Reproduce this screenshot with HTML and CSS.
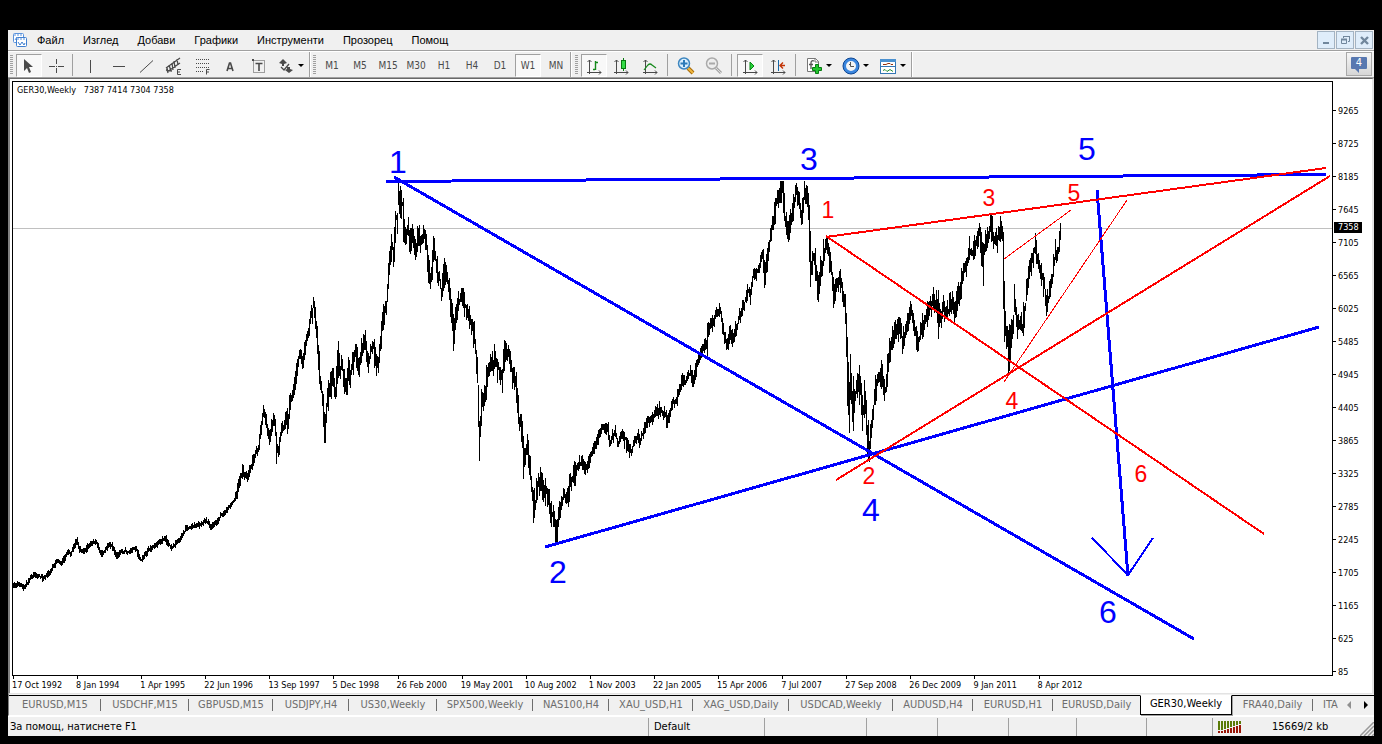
FILE: index.html
```html
<!DOCTYPE html>
<html lang="bg">
<head>
<meta charset="utf-8">
<title>GER30,Weekly</title>
<link rel="stylesheet" href="styles.css">
</head>
<body>
<div class="app">
  <header class="menubar">
    <svg class="app-icon" width="16" height="16" viewBox="0 0 16 16"><rect x="1.5" y="1.500" width="10" height="9" rx="1" fill="#fff" stroke="#5b93dc"/><path d="M2 3h9" stroke="#5b93dc" stroke-dasharray="2 1"/><path d="M3 8l2-3v3" fill="none" stroke="#5b93dc"/><rect x="4.500" y="5.500" width="10" height="9" rx="1" fill="#fff" stroke="#3f7fd0"/><path d="M5 7h9" stroke="#5b93dc" stroke-dasharray="2 1"/><path d="M6 10l2 3 2-3 2 3 1-2" fill="none" stroke="#3f7fd0"/></svg>
    <nav class="menu">
      <button>Файл</button><button>Изглед</button><button>Добави</button><button>Графики</button><button>Инструменти</button><button>Прозорец</button><button>Помощ</button>
    </nav>
    <div class="window-buttons">
      <button aria-label="Minimize"><svg width="14" height="14" viewBox="0 0 14 14"><path d="M4 10h6" stroke="#71879c" stroke-width="2"/></svg></button>
      <button aria-label="Restore"><svg width="14" height="14" viewBox="0 0 14 14" fill="none" stroke="#71879c"><path d="M5.500 5V3.500h6v5H10M5 3.500h7"/><path d="M3 6.500h6" stroke-width="2"/><path d="M3.500 6v4.500h5V6"/></svg></button>
      <button aria-label="Close"><svg width="14" height="14" viewBox="0 0 14 14"><path d="M4 4l7 7M11 4l-7 7" stroke="#71879c" stroke-width="2.400"/></svg></button>
    </div>
  </header>

  <div class="toolbar">
    <div class="group">
      <span class="grip"></span>
      <button class="tool pressed" aria-label="Cursor"><svg width="20" height="20" viewBox="0 0 20 20"><path d="M5 3v12l3-3 2 5 2-1-2-5h4z" fill="#4a4a4a"/></svg></button>
      <button class="tool" aria-label="Crosshair"><svg width="20" height="20" viewBox="0 0 20 20"><path d="M9.500 3v5M9.500 12v5M2 10.500h6M11 10.500h6M9 10.500h1" stroke="#4a4a4a"/></svg></button>
      <span class="sep"></span>
      <button class="tool" aria-label="Vertical line"><svg width="20" height="20" viewBox="0 0 20 20"><path d="M10.500 4v13" stroke="#4a4a4a"/></svg></button>
      <button class="tool" aria-label="Horizontal line"><svg width="20" height="20" viewBox="0 0 20 20"><path d="M5 10.500h12" stroke="#4a4a4a"/></svg></button>
      <button class="tool" aria-label="Trend line"><svg width="20" height="20" viewBox="0 0 20 20"><path d="M4 16.500L17 4.500" stroke="#4a4a4a"/></svg></button>
      <button class="tool" aria-label="Channel"><svg width="20" height="20" viewBox="0 0 20 20"><path d="M2 12L16 2M3 16L16 7M3 12l1 5M5 9l2 6M8 7l1 7M10 5l1 7M13 3l1 6M2 14l6 1" fill="none" stroke="#4a4a4a" stroke-width="1.300"/><path d="M17 13.500h-3.500v5H17M13.500 16H16" fill="none" stroke="#4a4a4a"/></svg></button>
      <button class="tool" aria-label="Fibonacci"><svg width="20" height="20" viewBox="0 0 20 20" stroke="#4a4a4a" fill="none"><path d="M4 3.500h13M4 7.500h13M4 11.500h13M4 15.500h8" stroke-dasharray="1 1"/><path d="M17.500 13.500h-3v5M14.500 16H17"/></svg></button>
      <button class="tool" aria-label="Text"><svg width="20" height="20" viewBox="0 0 20 20"><path d="M7 15L9.500 7h1L13 15M8 12.500h4" fill="none" stroke="#4a4a4a" stroke-width="1.600"/></svg></button>
      <button class="tool" aria-label="Text label"><svg width="20" height="20" viewBox="0 0 20 20"><rect x="5.500" y="4.500" width="11" height="12" fill="none" stroke="#4a4a4a" stroke-dasharray="1 1"/><path d="M4 3h2v2H4z" fill="#4a4a4a"/><path d="M7.500 7.500h7M11 7v8" stroke="#4a4a4a" stroke-width="1.600"/></svg></button>
      <button class="tool drop" aria-label="Arrows"><svg width="20" height="20" viewBox="0 0 20 20"><path d="M3 7l4-4 4 4-3 1v2H6V8zM9 14l2-1v-2h3v2l3 1-4 3z" fill="#4a4a4a"/><path d="M5 11l3 3 5-6" fill="none" stroke="#4a4a4a" stroke-width="1.300"/></svg><span class="caret"></span></button>
    </div>
    <div class="group">
      <span class="grip"></span>
      <button class="tool">M1</button><button class="tool">M5</button><button class="tool">M15</button><button class="tool">M30</button><button class="tool">H1</button><button class="tool">H4</button><button class="tool">D1</button><button class="tool pressed">W1</button><button class="tool">MN</button>
    </div>
    <div class="group wide">
      <span class="grip"></span>
      <button class="tool pressed" aria-label="Bar chart"><svg width="20" height="20" viewBox="0 0 20 20" fill="none" stroke="#4a4a4a"><path d="M5.500 18V4M3.500 6l2-2 2 2M3 16.500h14M15 14.500l2 2-2 2"/><path d="M11.500 5v9M12 6.500h2M9 13.500h2" stroke="#168a1c" stroke-width="1.400"/></svg></button>
      <button class="tool" aria-label="Candlesticks"><svg width="20" height="20" viewBox="0 0 20 20" fill="none" stroke="#4a4a4a"><path d="M4.500 18V4M2.500 6l2-2 2 2M2 16.500h14M14 14.500l2 2-2 2"/><path d="M11.500 2v13" stroke="#087a10"/><rect x="9.500" y="4.500" width="4" height="8" fill="#35dc48" stroke="#087a10"/></svg></button>
      <button class="tool" aria-label="Line chart"><svg width="20" height="20" viewBox="0 0 20 20" fill="none" stroke="#4a4a4a"><path d="M5.500 18V4M3.500 6l2-2 2 2M3 16.500h14M15 14.500l2 2-2 2"/><path d="M4 14l4-5q2-2 4 0l4 3" stroke="#168a1c" stroke-width="1.200"/></svg></button>
      <span class="sep"></span>
      <button class="tool" aria-label="Zoom in"><svg width="20" height="20" viewBox="0 0 20 20"><path d="M12 12l5 5" stroke="#a96c08" stroke-width="4"/><path d="M12 12l5 5" stroke="#f0b840" stroke-width="2"/><circle cx="8" cy="7.500" r="5.500" fill="#d9efff" stroke="#3d86bf" stroke-width="1.500"/><path d="M4.500 7.500h7M8 4v7" stroke="#2b7bb9" stroke-width="2"/></svg></button>
      <button class="tool" aria-label="Zoom out"><svg width="20" height="20" viewBox="0 0 20 20"><path d="M12 12l5 5" stroke="#a5a5a5" stroke-width="3"/><path d="M12 12l5 5" stroke="#ddd"/><circle cx="8" cy="7.500" r="5.500" fill="#eee" stroke="#aaa" stroke-width="1.500"/><path d="M5 7.500h6" stroke="#aaa" stroke-width="2"/></svg></button>
      <span class="sep"></span>
      <button class="tool pressed" aria-label="Auto scroll"><svg width="20" height="20" viewBox="0 0 20 20" fill="none" stroke="#4a4a4a"><path d="M5.500 18V4M3.500 6l2-2 2 2M3 16.500h14M15 14.500l2 2-2 2"/><path d="M10 6l4 4-4 4z" fill="#28d33c" stroke="#078512"/></svg></button>
      <button class="tool" aria-label="Chart shift"><svg width="20" height="20" viewBox="0 0 20 20" fill="none" stroke="#4a4a4a"><path d="M5.500 18V4M3.500 6l2-2 2 2M3 16.500h14M15 14.500l2 2-2 2"/><path d="M10.500 4v11" stroke="#1769a8"/><path d="M12 9.500h5M15 6.500l-3 3 3 3" stroke="#c33406" stroke-width="1.400"/></svg></button>
      <span class="sep"></span>
      <button class="tool drop" aria-label="Indicators"><svg width="20" height="20" viewBox="0 0 20 20"><path d="M3.500 2.500h8l3 3v10h-11z" fill="#fff" stroke="#777"/><path d="M11 2v4h4" fill="none" stroke="#777"/><path d="M10 5q-3-1-3 2v6M5 8.500h4" fill="none" stroke="#555" stroke-width="1.300"/><path d="M11.500 8.500h3v3h3v3h-3v3h-3v-3h-3v-3h3z" fill="#22c52e" stroke="#087c12"/></svg><span class="caret"></span></button>
      <button class="tool drop" aria-label="Periods"><svg width="20" height="20" viewBox="0 0 20 20"><circle cx="10" cy="10" r="6.500" fill="#f4f4f4" stroke="#3b86de" stroke-width="3"/><circle cx="10" cy="10" r="8" fill="none" stroke="#0d4692"/><path d="M9.500 6v4.500H13M8 8l2 2" fill="none" stroke="#555"/></svg><span class="caret"></span></button>
      <button class="tool drop" aria-label="Templates"><svg width="20" height="20" viewBox="0 0 20 20"><rect x="2.500" y="3.500" width="15" height="14" fill="#fff" stroke="#3476b5"/><path d="M2 4.500h16" stroke="#4b91d0" stroke-width="3"/><path d="M3 10.500h14" stroke="#3476b5"/><path d="M5 8.500h3l2-1h2l1 1h2" fill="none" stroke="#96330f"/><path d="M5 14.500l2-1 2 2 3-2 3 2" fill="none" stroke="#238c30"/></svg><span class="caret"></span></button>
    </div>
    <button class="messages" aria-label="Messages"><span>4</span></button>
  </div>

  <main class="chart">
    <div class="plot">
      <svg class="plot-lines" viewBox="13 82 1319 593" preserveAspectRatio="none">
        <path class="bid" d="M13 228.500H1332"/>
        <path class="bars" id="bars"/>
        <path class="wave blue" d="M386 181.500L1326 174.500M394 177L1194 639M545 547L1319 327M1097 190L1128 576"/>
        <path class="wave tip" d="M1092 538L1128 575L1153 538"/>
        <path class="wave red" d="M826 237L1326 168M826 236L1264 534M836 480L1330 176"/>
        <path class="wave thin" d="M1004 259L1071 210M1004 382L1127 200"/>
      </svg>
      <div id="marks"></div>
      <div class="quote">GER30,Weekly&nbsp;&nbsp; 7387 7414 7304 7358</div>
    </div>
    <ol class="prices">
      <li>9265</li><li>8725</li><li>8185</li><li>7645</li><li>7105</li><li>6565</li><li>6025</li><li>5485</li><li>4945</li><li>4405</li><li>3865</li><li>3325</li><li>2785</li><li>2245</li><li>1705</li><li>1165</li><li>625</li><li>85</li>
      <li class="current">7358</li>
    </ol>
    <ol class="dates">
      <li>17 Oct 1992</li><li>8 Jan 1994</li><li>1 Apr 1995</li><li>22 Jun 1996</li><li>13 Sep 1997</li><li>5 Dec 1998</li><li>26 Feb 2000</li><li>19 May 2001</li><li>10 Aug 2002</li><li>1 Nov 2003</li><li>22 Jan 2005</li><li>15 Apr 2006</li><li>7 Jul 2007</li><li>27 Sep 2008</li><li>26 Dec 2009</li><li>9 Jan 2011</li><li>8 Apr 2012</li>
    </ol>
  </main>

  <div class="tabbar">
    <nav class="tabs">
      <button>EURUSD,M15</button><button>USDCHF,M15</button><button>GBPUSD,M15</button><button>USDJPY,H4</button><button>US30,Weekly</button><button>SPX500,Weekly</button><button>NAS100,H4</button><button>XAU_USD,H1</button><button>XAG_USD,Daily</button><button>USDCAD,Weekly</button><button>AUDUSD,H4</button><button>EURUSD,H1</button><button class="before">EURUSD,Daily</button><button class="active">GER30,Weekly</button><button>FRA40,Daily</button><button class="last">ITA</button>
    </nav>
    <button class="scroll off" aria-label="Scroll left"></button>
    <button class="scroll" aria-label="Scroll right"></button>
  </div>

  <footer class="status">
    <span>За помощ, натиснете F1</span><span>Default</span><span></span><span></span><span></span><span></span><span></span><span></span>
    <span class="traffic"><svg width="24" height="13" viewBox="0 0 24 13"><path d="M1 0v9M4 0v9M7 0v8M10 0v7M13 0v6M16 0v5M19 0v4M22 0v3" stroke="#5a7a08" stroke-width="2"/><path d="M1 10v2M4 10v2M7 9v3M10 8v4M13 7v5M16 6v6M19 5v7M22 4v8" stroke="#9b1708" stroke-width="2"/></svg>15669/2 kb</span>
    <svg class="resize" width="14" height="14" viewBox="0 0 14 14"><path d="M0 14L14 0M4 14L14 4M8 14l6-6M12 14l2-2" stroke="#999" stroke-width="1.500"/></svg>
  </footer>
</div>
<script src="chart.js"></script>
</body>
</html>
```

FILE: styles.css
```css
* { box-sizing: border-box; }
body {
  margin: 0;
  background: #000;
  color: #000;
  font: 11px/14px "DejaVu Sans Condensed", "DejaVu Sans", sans-serif;
}
button { font: inherit; color: inherit; border: 0; padding: 0; background: none; }
ol { list-style: none; margin: 0; padding: 0; }
svg { display: block; flex: none; }

.app {
  min-height: 100vh;
  display: flex;
  flex-direction: column;
  border: solid #000;
  border-width: 30px 8px 8px;
  background: #f0f0f0;
}

.menubar { display: flex; align-items: center; height: 21px; padding-left: 4px; border-bottom: 1px solid #a0a0a0; }
.menu { display: flex; flex: 1; gap: 19px; padding-left: 9px; font: 11px/16px "Liberation Sans", sans-serif; }
.window-buttons { display: flex; gap: 1px; padding-right: 1px; }
.window-buttons button { width: 18px; height: 18px; display: grid; place-items: center; border: 1px solid #a3b3c2; background: #dfedfa; }

.toolbar { display: flex; height: 27px; border-top: 1px solid #fff; border-bottom: 1px solid #a0a0a0; color: #4a4a4a; font-size: 10px; }
.group { display: flex; align-items: center; gap: 2px; padding: 1px 1px 0 2px; border-right: 1px solid #a0a0a0; box-shadow: 1px 0 #fff; margin-right: 1px; }
.grip { width: 3px; height: 20px; margin-right: 1px; background: repeating-linear-gradient(#a0a0a0 0 1px, #f0f0f0 1px 2px); }
.sep { width: 3px; height: 22px; border-left: 1px solid #a0a0a0; }
.wide { padding-left: 3px; }
.wide .sep { width: 6px; border: 0; background: linear-gradient(#a0a0a0, #a0a0a0) 2px 0 / 1px 100% no-repeat; }
.tool { width: 26px; height: 23px; padding-top: 1px; display: flex; align-items: center; justify-content: center; border: 1px solid transparent; }
.tool.drop { width: 35px; justify-content: flex-start; padding-left: 2px; }
.tool.pressed { border-color: #a0a0a0 #fff #fff #a0a0a0; background: #f8f8f8; }
.caret { border: solid transparent; border-width: 3px 3px 0; border-top-color: #000; margin-left: 2px; }
.messages { width: 26px; height: 24px; margin: 0 2px 0 auto; border: 1px solid #a8a8a8; background: linear-gradient(#f6f6f6, #d6d6d6); display: grid; place-items: center; }
.messages span { position: relative; width: 16px; height: 12px; margin-bottom: 3px; border-radius: 1px; background: #5878b0; color: #fff; font-size: 11px; line-height: 12px; }
.messages span::after { content: ""; position: absolute; left: 4px; top: 12px; border-left: 4px solid transparent; border-top: 4px solid #5878b0; }

.chart {
  flex: 1;
  display: grid;
  grid-template-columns: 1fr 39px;
  grid-template-rows: 1fr 17px;
  padding: 2px 0 0 2px;
  border: solid;
  border-width: 1px 2px 1px 2px;
  border-color: #696969 #e3e3e3 #e3e3e3 #808080;
  background: #fff;
  font-size: 9px;
  line-height: 12px;
}
.plot { position: relative; border: 1px solid #000; min-height: 0; }
.plot-lines { position: absolute; inset: 0; width: 100%; height: 100%; fill: none; shape-rendering: crispEdges; }
.plot-lines path { vector-effect: non-scaling-stroke; }
.bid { stroke: #c0c0c0; }
.bars { stroke: #000; }
.blue { stroke: #00f; stroke-width: 3; }
.tip { stroke: #00f; stroke-width: 2; }
.red { stroke: #f00; stroke-width: 2; }
.thin { stroke: #f00; }
.mark { position: absolute; translate: -50% -50%; font-family: "Liberation Sans", sans-serif; line-height: 1; }
.mark.major { color: #00f; font-size: 32px; }
.mark.minor { color: #f00; font-size: 23px; }
.quote { position: relative; padding: 2px 4px; }

.prices { grid-row: 1 / 3; grid-column: 2; position: relative; display: flex; flex-direction: column; padding: 13px 0 5px; }
.prices li { flex: 1; display: flex; align-items: center; gap: 2px; }
.prices li::before { content: ""; width: 3px; height: 1px; background: #000; }
.prices .current { position: absolute; top: 23%; left: 1px; width: 28px; padding-left: 4px; line-height: 11px; background: #000; color: #fff; }
.prices .current::before { display: none; }
.dates { display: grid; grid-template-columns: repeat(20, 64fr) 39fr; white-space: nowrap; }
.dates li { min-width: 0; }
.dates li::before { content: ""; display: block; width: 1px; height: 3px; margin-left: 1px; background: #000; }

.tabbar { display: flex; height: 22px; align-items: flex-start; color: #6d6d6d; border-left: 1px solid #808080; border-bottom: 1px solid #fff; }
.tabs { flex: 1; min-width: 0; display: grid; height: 20px; margin-top: 1px; grid-template-columns: 92px 88px 84px 76px 88px 96px 76px 84px 96px 104px 80px 80px 87px 92px 81px 1fr; }
.tabs button { padding: 0 0 2px; border-top: 1px solid #000; white-space: nowrap; background: linear-gradient(#6d6d6d, #6d6d6d) right 3px / 1px 12px no-repeat; }
.tabs .before { background: none; }
.tabs .active { border: 1px solid #000; border-top-color: #fff; background: #fff; color: #000; box-shadow: 1px 1px #a0a0a0; }
.tabs .last { background: none; padding-left: 10px; text-align: left; }
.scroll { width: 17px; height: 19px; margin-top: 1px; border-top: 1px solid #000; display: grid; place-items: center; }
.scroll::after { content: ""; border: solid transparent; border-width: 4px 0 4px 4px; border-left-color: #000; }
.scroll.off::after { border-width: 4px 4px 4px 0; border-right-color: #909090; }

.status { position: relative; display: grid; grid-template-columns: 1fr 116px 102px 71px 71px 68px 70px 66px 162px; height: 20px; padding: 1px 0; border-top: 1px solid #fff; }
.status > span { padding: 0 2px; border-left: 1px solid #a0a0a0; line-height: 18px; }
.status > span:nth-child(2) { padding-left: 5px; }
.status > span:first-child { border: 0; }
.status > .traffic { display: flex; align-items: center; gap: 30px; padding-left: 5px; }
.resize { position: absolute; right: 0; bottom: 0; }
```

FILE: chart.js
```js
// Weekly price path: x, y pairs on the plot canvas, one bar per horizontal unit.
const path = `13 586 17 583 22 587 27 582 32 574 42 577 47 575 53 565 57 560 61 563 67 551 70 553 76 540 79 549 84 551 88 545 95 540 101 555 107 546 111 544 116 556 120 551 128 551 135 548 140 559 147 551 158 542 165 538 167 543 171 547 180 538 185 528 197 524 198 525 202 522 207 521 210 526 217 521 220 514 224 513 230 504 233 501 236 492 239 480 242 470 246 478 250 467 253 458 258 445 260 430 263 409 266 425 269 439 271 425 273 416 275 430 276 450 278 448 281 426 283 428 286 415 287 425 289 403 293 390 296 370 299 351 302 364 305 341 308 330 309 320 313 303 315 322 317 347 319 378 322 400 324 435 326 403 330 387 332 370 334 396 336 377 338 354 339 370 341 365 343 378 346 385 348 370 349 380 354 352 358 366 362 347 364 337 367 368 370 350 373 346 376 362 378 360 381 327 383 315 386 300 388 270 391 245 393 253 395 215 397 222 399 191 400 207 402 200 403 228 405 237 407 226 409 248 411 230 415 252 418 231 420 241 423 231 425 235 427 263 430 280 433 250 436 267 440 288 445 270 449 290 453 334 454 327 457 302 462 297 467 315 472 323 475 353 477 380 479 435 481 402 485 387 489 362 491 368 494 355 497 367 501 382 504 350 508 357 512 375 515 380 518 417 521 427 523 458 527 447 530 477 533 508 537 485 541 482 544 493 547 493 550 513 553 520 556 533 557 520 560 507 563 493 566 500 570 480 575 470 581 460 584 471 588 460 592 450 597 437 601 427 607 428 609 444 614 430 617 443 622 434 628 447 630 452 635 437 640 438 645 423 652 417 659 410 664 412 667 422 672 402 676 400 681 379 685 381 689 371 693 380 697 360 703 343 706 350 707 328 712 322 719 308 722 330 726 348 729 333 731 341 737 322 742 307 747 290 750 293 752 277 757 270 762 254 764 278 767 257 770 232 773 217 776 199 779 192 782 190 784 217 787 230 791 220 793 198 796 191 798 200 801 216 804 191 806 191 808 207 810 270 812 257 814 257 817 289 821 267 823 253 826 243 829 260 833 291 837 283 839 280 842 293 844 300 846 340 847 395 849 417 850 380 852 412 855 393 859 380 862 414 864 397 867 430 868 450 870 430 873 403 876 383 880 371 885 391 888 353 893 337 899 326 902 342 905 328 911 311 913 330 917 340 921 332 925 317 930 303 935 299 938 317 941 313 944 307 947 311 951 298 954 310 957 297 959 293 962 274 967 260 969 250 973 252 977 237 979 230 982 258 985 242 990 222 993 240 996 241 999 226 1002 237 1003 303 1005 335 1007 340 1008 363 1011 332 1014 307 1017 328 1019 317 1022 328 1025 300 1028 272 1032 257 1034 245 1037 260 1041 273 1043 287 1046 305 1049 293 1052 273 1054 255 1058 250 1060 230`.split(" ").map(Number);

// Weeks with an unusually long bar: x -> [high, low].
const spikes = {
  276: [432, 464], 313: [297, 308], 324: [412, 443], 338: [341, 378], 398: [180, 205],
  428: [255, 283], 453: [314, 351], 478: [385, 427], 479: [421, 461], 523: [436, 479], 533: [490, 523],
  556: [520, 543], 781: [181, 203], 804: [181, 200], 809: [205, 262], 810: [231, 287], 818: [275, 302], 848: [362, 415],
  849: [382, 433], 850: [354, 400], 853: [376, 431], 859: [365, 405], 862: [395, 431], 867: [425, 456],
  868: [420, 459], 938: [290, 339], 979: [223, 236], 983: [243, 286], 990: [215, 232], 1003: [232, 309],
  1004: [281, 342], 1008: [330, 374], 1009: [324, 371], 1010: [325, 361], 1014: [284, 312], 1046: [295, 316], 1060: [223, 240]
};

let seed = 11;
const random = () => (seed = (seed * 16807) % 2147483647) / 2147483647;

// Typical weekly swing for each stretch of the history.
const swing = x => {
  if (x < 236) return 5;
  if (x < 310) return 11;
  if (x > 575 && x < 700) return 11;
  if (x >= 700 && x < 770) return 13;
  return 20;
};

let bars = "";
let segment = 0;
let previous = path[1];
for (let x = 13; x <= 1060; x++) {
  while (path[segment + 2] < x) segment += 2;
  const [x0, y0, x1, y1] = path.slice(segment, segment + 4);
  const level = y0 + (y1 - y0) * (x - x0) / (x1 - x0);
  const reach = swing(x);
  const centre = level + (random() - 0.5) * reach * 0.5;
  let high = Math.min(centre, previous) - random() * reach * 0.6;
  let low = Math.max(centre, previous) + random() * reach * 0.6 + 1;
  high = Math.max(high, 181);
  if (spikes[x]) [high, low] = spikes[x];
  bars += `M${x + 0.5} ${Math.round(high)}V${Math.round(low)}`;
  previous = level;
}
document.getElementById("bars").setAttribute("d", bars);

// Wave counts: label, x, y, degree.
const marks = [
  [1, 398, 162, "major"], [2, 558, 572, "major"], [3, 809, 159, "major"],
  [4, 871, 510, "major"], [5, 1087, 149, "major"], [6, 1108, 612, "major"],
  [1, 828, 210, "minor"], [2, 869, 476, "minor"], [3, 989, 198, "minor"],
  [4, 1012, 401, "minor"], [5, 1074, 193, "minor"], [6, 1141, 474, "minor"]
];
for (const [label, x, y, degree] of marks) {
  const mark = document.createElement("span");
  mark.className = `mark ${degree}`;
  mark.textContent = label;
  mark.style.left = `${(x - 13) / 13.19}%`;
  mark.style.top = `${(y - 82) / 5.93}%`;
  document.getElementById("marks").append(mark);
}
```
